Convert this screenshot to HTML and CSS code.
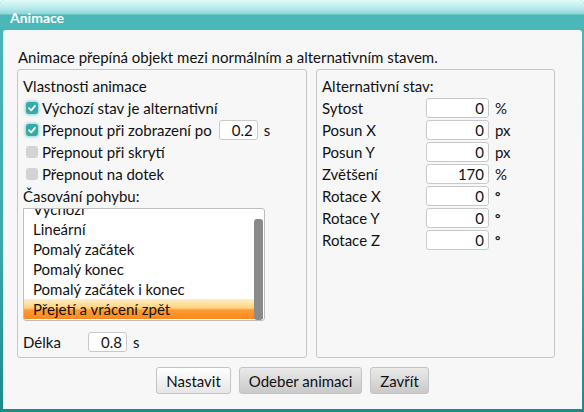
FILE: index.html
```html
<!DOCTYPE html>
<html>
<head>
<meta charset="utf-8">
<link rel="stylesheet" href="styles.css">
</head>
<body>
<div class="window">
  <div class="titlebar">Animace</div>
  <div class="body">
    <p class="intro">Animace přepíná objekt mezi normálním a alternativním stavem.</p>
    <div class="groups">
      <div class="group left">
        <div class="label">Vlastnosti animace</div>
        <div class="check-row"><span class="cb on"><svg viewBox="0 0 12 12" width="12" height="12"><path d="M3 6.2 L5.2 8.3 L9 3.9" fill="none" stroke="#fff" stroke-width="1.8" stroke-linecap="round" stroke-linejoin="round"/></svg></span>Výchozí stav je alternativní</div>
        <div class="check-row"><span class="cb on"><svg viewBox="0 0 12 12" width="12" height="12"><path d="M3 6.2 L5.2 8.3 L9 3.9" fill="none" stroke="#fff" stroke-width="1.8" stroke-linecap="round" stroke-linejoin="round"/></svg></span>Přepnout při zobrazení po <span class="input small">0.2</span><span class="unit">s</span></div>
        <div class="check-row"><span class="cb"></span>Přepnout při skrytí</div>
        <div class="check-row"><span class="cb"></span>Přepnout na dotek</div>
        <div class="label timing">Časování pohybu:</div>
        <div class="listbox">
          <div class="items">
            <div class="item">Výchozí</div>
            <div class="item">Lineární</div>
            <div class="item">Pomalý začátek</div>
            <div class="item">Pomalý konec</div>
            <div class="item">Pomalý začátek i konec</div>
            <div class="item sel">Přejetí a vrácení zpět</div>
          </div>
          <div class="thumb"></div>
        </div>
        <div class="length-row"><span class="len-label">Délka</span><span class="input small">0.8</span><span class="unit">s</span></div>
      </div>
      <div class="group right">
        <div class="label">Alternativní stav:</div>
        <div class="prop"><span class="pname">Sytost</span><span class="input wide">0</span><span class="unit">%</span></div>
        <div class="prop"><span class="pname">Posun X</span><span class="input wide">0</span><span class="unit">px</span></div>
        <div class="prop"><span class="pname">Posun Y</span><span class="input wide">0</span><span class="unit">px</span></div>
        <div class="prop"><span class="pname">Zvětšení</span><span class="input wide">170</span><span class="unit">%</span></div>
        <div class="prop"><span class="pname">Rotace X</span><span class="input wide">0</span><span class="unit deg">°</span></div>
        <div class="prop"><span class="pname">Rotace Y</span><span class="input wide">0</span><span class="unit deg">°</span></div>
        <div class="prop"><span class="pname">Rotace Z</span><span class="input wide">0</span><span class="unit deg">°</span></div>
      </div>
    </div>
    <div class="buttons">
      <button class="btn light">Nastavit</button>
      <button class="btn">Odeber animaci</button>
      <button class="btn">Zavřít</button>
    </div>
  </div>
</div>
</body>
</html>
```

FILE: styles.css
```css
html, body {
  margin: 0;
  padding: 0;
}
body {
  font-family: Lato, "Open Sans", sans-serif;
  font-size: 15px;
  color: #111;
  background: #fff;
}
.window {
  width: 584px;
  height: 412px;
  box-sizing: border-box;
  background: linear-gradient(to bottom, #4bb8b8 0%, #3aa9a9 60%, #1b8b8b 100%);
  padding: 0 2px 3px 3px;
  display: flex;
  flex-direction: column;
  border-radius: 4px 4px 0 0;
  overflow: hidden;
}
.titlebar {
  height: 30px;
  flex: none;
  margin: 0 -2px 0 -3px;
  padding-left: 10px;
  box-sizing: border-box;
  background: linear-gradient(to bottom, #e2fbfb 0px, #b9eaea 8px, #8fd5d5 14px, #4ab8b8 15px, #4ab8b8 30px);
  color: #fff;
  font-weight: bold;
  font-size: 14px;
  line-height: 35px;
}
.body {
  flex: 1;
  background: #f7f7f7;
  border-radius: 3px 3px 0 0;
  padding: 17px 0 0 14px;
  display: flex;
  flex-direction: column;
}
.intro {
  margin: 0 0 2px 1px;
  line-height: 20px;
}
.groups {
  display: flex;
  gap: 9px;
}
.group {
  border: 1px solid #c6c6c6;
  border-radius: 3px;
  height: 289px;
  box-sizing: border-box;
}
.group.left {
  width: 290px;
  padding: 5px 0 0 5px;
}
.group.right {
  width: 239px;
  padding: 5px 0 0 5px;
}
.label {
  line-height: 22px;
}
.check-row {
  display: flex;
  align-items: center;
  height: 22px;
}
.cb {
  width: 12px;
  height: 12px;
  border-radius: 3px;
  background: #d3d3d3;
  margin: 0 4px 0 3px;
  flex: none;
  display: flex;
}
.cb.on {
  background: #35aaaa;
  box-shadow: 0 0 3px 1px rgba(60, 180, 180, 0.55);
}
.input {
  display: inline-block;
  box-sizing: border-box;
  height: 20px;
  line-height: 18px;
  border: 1px solid #c9c9c9;
  border-radius: 3px;
  background: #fff;
  text-align: right;
  padding-right: 4px;
}
.input.small {
  width: 39px;
}
.check-row .input {
  margin-left: 7px;
}
.unit {
  margin-left: 6px;
}
.listbox {
  position: relative;
  width: 242px;
  height: 113px;
  box-sizing: border-box;
  border: 1px solid #bdbdbd;
  border-radius: 0 3px 3px 3px;
  background: #fff;
  overflow: hidden;
  margin-top: 1px;
}
.items {
  margin-top: -10px;
}
.item {
  height: 20px;
  line-height: 20px;
  padding-left: 9px;
  width: 230px;
}
.item.sel {
  background: linear-gradient(to bottom, #ffedc4 0%, #ffd27c 45%, #ff9a32 55%, #fd8a20 100%);
}
.thumb {
  position: absolute;
  right: 1px;
  top: 10px;
  width: 9px;
  height: 101px;
  background: #8a8a8a;
  border-radius: 3px;
}
.length-row {
  display: flex;
  align-items: center;
  height: 22px;
  margin-top: 10px;
}
.len-label {
  width: 65px;
}
.prop {
  display: flex;
  align-items: center;
  height: 22px;
}
.pname {
  width: 104px;
}
.input.wide {
  width: 63px;
}
.deg {
  font-size: 13px;
  font-weight: bold;
}
.buttons {
  display: flex;
  justify-content: center;
  gap: 8px;
  margin: 9px 0 0 -14px;
}
.btn {
  font-family: inherit;
  font-size: 15px;
  color: #111;
  height: 27px;
  padding: 0 9px;
  border: 1px solid #c4c4c4;
  border-radius: 3px;
  background: linear-gradient(to bottom, #eaeaea, #c9c9c9);
}
.btn.light {
  background: linear-gradient(to bottom, #ffffff, #e6e6e6);
}
```
